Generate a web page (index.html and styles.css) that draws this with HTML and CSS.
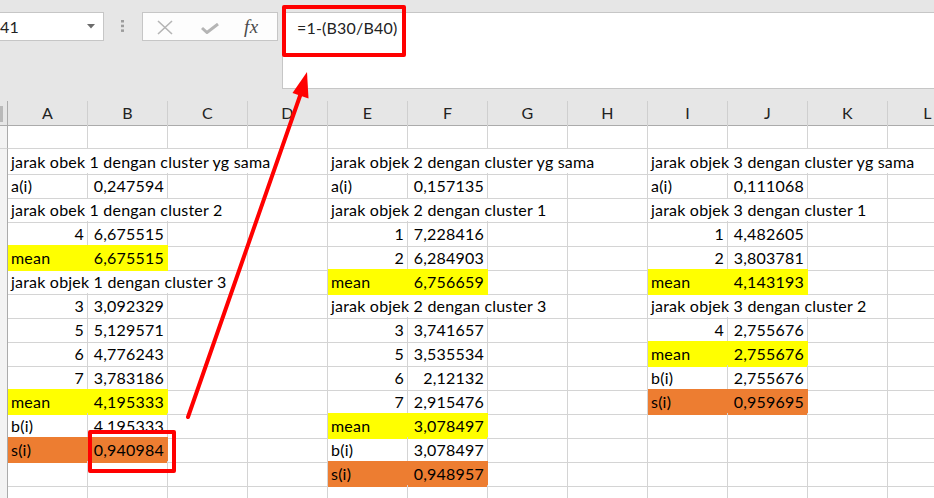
FILE: index.html
```html
<!DOCTYPE html>
<html>
<head>
<meta charset="utf-8">
<link rel="stylesheet" href="styles.css">
</head>
<body>
<div class="app">
  <div class="toolbar">
    <div class="namebox">
      <span class="ref">41</span>
      <svg class="dd" width="8" height="5" viewBox="0 0 8 5"><path d="M0 0H8L4 4.5Z" fill="#6b6b6b"/></svg>
    </div>
    <svg class="grip" width="4" height="13" viewBox="0 0 4 13">
      <rect x="0" y="0" width="3" height="2.5" fill="#9c9c9c"/>
      <rect x="0" y="4.7" width="3" height="2.5" fill="#9c9c9c"/>
      <rect x="0" y="9.4" width="3" height="2.5" fill="#9c9c9c"/>
    </svg>
    <div class="fxbtns">
      <svg class="ic-x" width="16" height="15" viewBox="0 0 16 15"><path d="M1 1L15 14M15 1L1 14" stroke="#b5b5b5" stroke-width="1.6" fill="none"/></svg>
      <svg class="ic-ok" width="18" height="11" viewBox="0 0 18 11"><path d="M1 5L6 9.5L17 1" stroke="#b5b5b5" stroke-width="3" fill="none"/></svg>
      <span class="fx">fx</span>
    </div>
    <div class="formula">=1-(B30/B40)</div>
  </div>

  <div class="sheet">
    <div class="row head">
      <div class="corner"><i></i></div>
      <div class="ch">A</div><div class="ch">B</div><div class="ch">C</div><div class="ch">D</div>
      <div class="ch">E</div><div class="ch">F</div><div class="ch">G</div><div class="ch">H</div>
      <div class="ch">I</div><div class="ch">J</div><div class="ch">K</div><div class="ch">L</div>
    </div>

    <div class="row">
      <div class="rh"></div>
      <div class="c"></div><div class="c"></div><div class="c"></div><div class="c"></div>
      <div class="c"></div><div class="c"></div><div class="c"></div><div class="c"></div>
      <div class="c"></div><div class="c"></div><div class="c"></div><div class="c"></div>
    </div>

    <div class="row">
      <div class="rh"></div>
      <div class="c s4">jarak obek 1 dengan cluster yg sama</div>
      <div class="c s4">jarak objek 2 dengan cluster yg sama</div>
      <div class="c s4">jarak objek 3 dengan cluster yg sama</div>
    </div>

    <div class="row">
      <div class="rh"></div>
      <div class="c">a(i)</div><div class="c n">0,247594</div><div class="c"></div><div class="c"></div>
      <div class="c">a(i)</div><div class="c n">0,157135</div><div class="c"></div><div class="c"></div>
      <div class="c">a(i)</div><div class="c n">0,111068</div><div class="c"></div><div class="c"></div>
    </div>

    <div class="row">
      <div class="rh"></div>
      <div class="c s3">jarak obek 1 dengan cluster 2</div><div class="c"></div>
      <div class="c s3">jarak objek 2 dengan cluster 1</div><div class="c"></div>
      <div class="c s3">jarak objek 3 dengan cluster 1</div><div class="c"></div>
    </div>

    <div class="row">
      <div class="rh"></div>
      <div class="c n">4</div><div class="c n">6,675515</div><div class="c"></div><div class="c"></div>
      <div class="c n">1</div><div class="c n">7,228416</div><div class="c"></div><div class="c"></div>
      <div class="c n">1</div><div class="c n">4,482605</div><div class="c"></div><div class="c"></div>
    </div>

    <div class="row">
      <div class="rh"></div>
      <div class="c y">mean</div><div class="c n y">6,675515</div><div class="c"></div><div class="c"></div>
      <div class="c n">2</div><div class="c n">6,284903</div><div class="c"></div><div class="c"></div>
      <div class="c n">2</div><div class="c n">3,803781</div><div class="c"></div><div class="c"></div>
    </div>

    <div class="row">
      <div class="rh"></div>
      <div class="c s3">jarak objek 1 dengan cluster 3</div><div class="c"></div>
      <div class="c y">mean</div><div class="c n y">6,756659</div><div class="c"></div><div class="c"></div>
      <div class="c y">mean</div><div class="c n y">4,143193</div><div class="c"></div><div class="c"></div>
    </div>

    <div class="row">
      <div class="rh"></div>
      <div class="c n">3</div><div class="c n">3,092329</div><div class="c"></div><div class="c"></div>
      <div class="c s3">jarak objek 2 dengan cluster 3</div><div class="c"></div>
      <div class="c s3">jarak objek 3 dengan cluster 2</div><div class="c"></div>
    </div>

    <div class="row">
      <div class="rh"></div>
      <div class="c n">5</div><div class="c n">5,129571</div><div class="c"></div><div class="c"></div>
      <div class="c n">3</div><div class="c n">3,741657</div><div class="c"></div><div class="c"></div>
      <div class="c n">4</div><div class="c n">2,755676</div><div class="c"></div><div class="c"></div>
    </div>

    <div class="row">
      <div class="rh"></div>
      <div class="c n">6</div><div class="c n">4,776243</div><div class="c"></div><div class="c"></div>
      <div class="c n">5</div><div class="c n">3,535534</div><div class="c"></div><div class="c"></div>
      <div class="c y">mean</div><div class="c n y">2,755676</div><div class="c"></div><div class="c"></div>
    </div>

    <div class="row">
      <div class="rh"></div>
      <div class="c n">7</div><div class="c n">3,783186</div><div class="c"></div><div class="c"></div>
      <div class="c n">6</div><div class="c n">2,12132</div><div class="c"></div><div class="c"></div>
      <div class="c">b(i)</div><div class="c n">2,755676</div><div class="c"></div><div class="c"></div>
    </div>

    <div class="row">
      <div class="rh"></div>
      <div class="c y">mean</div><div class="c n y">4,195333</div><div class="c"></div><div class="c"></div>
      <div class="c n">7</div><div class="c n">2,915476</div><div class="c"></div><div class="c"></div>
      <div class="c o">s(i)</div><div class="c n o">0,959695</div><div class="c"></div><div class="c"></div>
    </div>

    <div class="row">
      <div class="rh"></div>
      <div class="c">b(i)</div><div class="c n">4,195333</div><div class="c"></div><div class="c"></div>
      <div class="c y">mean</div><div class="c n y">3,078497</div><div class="c"></div><div class="c"></div>
      <div class="c"></div><div class="c"></div><div class="c"></div><div class="c"></div>
    </div>

    <div class="row">
      <div class="rh"></div>
      <div class="c o">s(i)</div><div class="c n o">0,940984</div><div class="c"></div><div class="c"></div>
      <div class="c">b(i)</div><div class="c n">3,078497</div><div class="c"></div><div class="c"></div>
      <div class="c"></div><div class="c"></div><div class="c"></div><div class="c"></div>
    </div>

    <div class="row">
      <div class="rh"></div>
      <div class="c"></div><div class="c"></div><div class="c"></div><div class="c"></div>
      <div class="c o">s(i)</div><div class="c n o">0,948957</div><div class="c"></div><div class="c"></div>
      <div class="c"></div><div class="c"></div><div class="c"></div><div class="c"></div>
    </div>

    <div class="row">
      <div class="rh"></div>
      <div class="c"></div><div class="c"></div><div class="c"></div><div class="c"></div>
      <div class="c"></div><div class="c"></div><div class="c"></div><div class="c"></div>
      <div class="c"></div><div class="c"></div><div class="c"></div><div class="c"></div>
    </div>
  </div>

  <div class="mark mark-formula"></div>
  <div class="mark mark-cell"></div>
  <svg class="arrow" width="934" height="498" viewBox="0 0 934 498">
    <line x1="188" y1="417" x2="301" y2="93" stroke="#ff0000" stroke-width="4" stroke-linecap="round"/>
    <polygon points="307,72 292.5,93 308.5,98.5" fill="#ff0000"/>
  </svg>
</div>
</body>
</html>
```

FILE: styles.css
```css
* { box-sizing: border-box; }
html, body { margin: 0; padding: 0; background: #ffffff; }

.app {
  position: relative;
  width: 934px;
  height: 498px;
  overflow: hidden;
  font-family: Lato, "Open Sans", sans-serif;
  font-size: 16px;
  letter-spacing: 0.2px;
  color: #000;
}

/* ---------- formula toolbar ---------- */
.toolbar {
  height: 101px;
  background: #e6e6e6;
  display: flex;
  align-items: flex-start;
  padding-top: 12px;
}
.namebox {
  margin-left: -2px;
  width: 106px;
  height: 29px;
  background: #ffffff;
  border: 1px solid #c6c6c6;
  display: flex;
  align-items: center;
  justify-content: space-between;
  padding: 0 8px 0 0;
}
.namebox .ref {
  margin-left: 1px;
  color: #222;
}
.grip {
  margin-left: 17px;
  margin-top: 8px;
}
.fxbtns {
  margin-left: 17px;
  width: 136px;
  height: 29px;
  background: #fdfdfd;
  border: 1px solid #c6c6c6;
  display: flex;
  align-items: center;
  padding-left: 14px;
}
.ic-x { margin-top: 1px; }
.ic-ok { margin-left: 28px; margin-top: 3px; }
.fx {
  margin-left: 25px;
  font-family: "Liberation Serif", "DejaVu Serif", serif;
  font-style: italic;
  font-size: 19px;
  color: #4a4a4a;
  letter-spacing: 0.5px;
}
.formula {
  margin-left: 4px;
  margin-right: -3px;
  flex: 1;
  height: 77px;
  background: #ffffff;
  border: 1px solid #c6c6c6;
  padding: 5px 0 0 14px;
  color: #222;
}

/* ---------- sheet grid ---------- */
.sheet {
  width: 975px;
}
.row {
  display: grid;
  grid-template-columns: 8px repeat(12, 80px);
  height: 24px;
}
.head {
  background: #e6e6e6;
}
.corner {
  position: relative;
  border-right: 1px solid #ababab;
  border-bottom: 1px solid #ababab;
}
.corner i {
  position: absolute;
  left: 0;
  bottom: 3px;
  width: 3px;
  height: 16px;
  background: #b9b9b9;
}
.ch {
  border-right: 1px solid #cfcfcf;
  border-bottom: 1px solid #ababab;
  text-align: center;
  line-height: 24px;
  color: #222;
}
.rh {
  background: #f3f3f3;
  border-right: 1px solid #ababab;
  border-bottom: 1px solid #d4d4d4;
}
.c {
  border-right: 1px solid #d4d4d4;
  border-bottom: 1px solid #d4d4d4;
  padding: 0 3px;
  line-height: 25px;
  white-space: nowrap;
  overflow: visible;
}
.s3 { grid-column: span 3; }
.s4 { grid-column: span 4; }
.n { text-align: right; }
.y { background: #ffff00; border-color: #ffff00; }
.o { background: #ed7d31; border-color: #ed7d31; }

/* ---------- annotations ---------- */
.mark {
  position: absolute;
  border: 4px solid #ff0000;
  border-radius: 2px;
}
.mark-formula {
  left: 282px;
  top: 5px;
  width: 124px;
  height: 52px;
}
.mark-cell {
  left: 88px;
  top: 430px;
  width: 88px;
  height: 43px;
}
.arrow {
  position: absolute;
  left: 0;
  top: 0;
  pointer-events: none;
}
```
